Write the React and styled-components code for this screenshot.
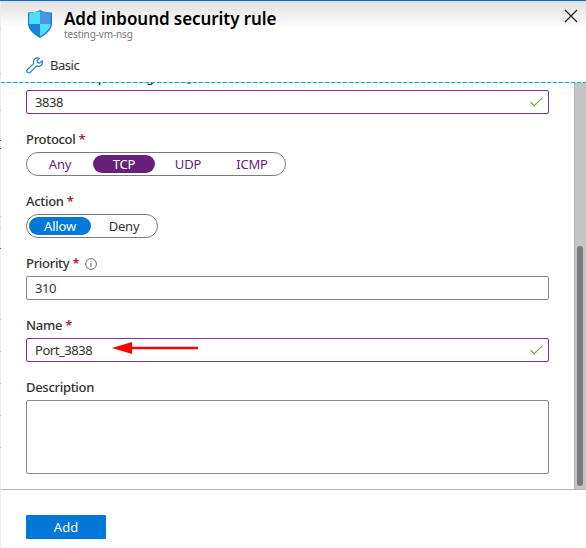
import React from "react";
import styled, { createGlobalStyle, css } from "styled-components";

const GlobalStyle = createGlobalStyle`
  * { box-sizing: border-box; }
  body { margin: 0; background: #fff; overflow: hidden; }
  button, input, textarea { font: inherit; letter-spacing: inherit; }
`;

const Screen = styled.div`
  display: flex;
  width: 586px;
  height: 548px;
  overflow: hidden;
  border-top: 1px solid #0072c9;
  font: 13px/18px "Noto Sans", "Open Sans", sans-serif;
  letter-spacing: -0.45px;
  color: #323130;
`;

const PageEdge = styled.div`
  flex: 0 0 1px;
  background: #eeeeee;
`;

const EdgeMark = styled.div`
  height: 1px;
  margin-top: ${(p) => p.$gap}px;
  background: ${(p) => p.$color};
`;

const Blade = styled.section`
  flex: 1;
  min-width: 0;
  display: flex;
  flex-direction: column;
`;

const Header = styled.header`
  display: flex;
  flex: none;
  height: 47px;
  padding: 8px 8px 0 26px;
  background: linear-gradient(#dfdfdf, #fff 26px);
`;

const Titles = styled.div`
  flex: 1;
  margin-left: 11px;
`;

const Title = styled.h1`
  margin: 0;
  font-size: 17px;
  line-height: 19px;
  font-weight: 600;
  letter-spacing: -0.07px;
  color: #000;
`;

const Subtitle = styled.div`
  font-size: 10px;
  line-height: 13px;
  letter-spacing: -0.13px;
  color: #7a7876;
`;

const CloseButton = styled.button`
  display: flex;
  width: 14px;
  height: 14px;
  padding: 0;
  border: 0;
  background: none;
`;

const Toolbar = styled.div`
  display: flex;
  flex: none;
  align-items: center;
  gap: 7px;
  height: 34px;
  padding-left: 25px;
`;

const Divider = styled.div`
  flex: none;
  height: 1px;
  background: repeating-linear-gradient(90deg, #00b4f0 0 4px, #c9dfe6 4px 6px);
`;

const Body = styled.div`
  display: flex;
  flex: none;
  height: 406px;
  overflow: hidden;
`;

const Form = styled.form`
  flex: 1;
  margin-top: -31px;
  padding: 0 25px;
`;

const Field = styled.div`
  display: flex;
  flex-direction: column;
  align-items: flex-start;
  height: 62px;
`;

const Label = styled.label`
  display: flex;
  flex: none;
  align-items: center;
  height: 38px;
  padding: 12px 0 0;
  font-weight: 500;
  letter-spacing: -0.3px;
  white-space: pre;
`;

const Required = styled.span`
  color: #a4262c;
  font-weight: 600;
`;

const box = css`
  width: 523px;
  border: 1px solid ${(p) => (p.$edited ? "#8a2da5" : "#8a8886")};
  border-radius: 2px;
  background: #fff;
`;

const InputBox = styled.div`
  ${box}
  display: flex;
  align-items: center;
  height: 24px;
  padding: 0 5px 0 8px;
`;

const Input = styled.input`
  flex: 1;
  min-width: 0;
  height: 20px;
  padding: 0;
  border: 0;
  outline: 0;
  background: none;
  color: inherit;
`;

const Area = styled.textarea`
  ${box}
  display: block;
  flex: none;
  height: 74px;
  resize: none;
`;

const Pills = styled.div`
  display: flex;
  height: 24px;
  padding: 2px;
  gap: 2px;
  border: 1px solid #7d7b79;
  border-radius: 12px;
`;

const Pill = styled.button`
  width: 62px;
  height: 18px;
  padding: 0;
  border: 0;
  border-radius: 9px;
  line-height: 18px;
  letter-spacing: -0.2px;
  background: ${(p) => (p.$on ? p.$fill : "none")};
  color: ${(p) => (p.$on ? "#fff" : p.$ink)};
`;

const ScrollTrack = styled.div`
  width: 12px;
  padding: 163px 2px 3px;
  border-left: 1px solid #b4b6b6;
  background: #c3c4c4;
`;

const ScrollThumb = styled.div`
  width: 6px;
  height: 100%;
  border-radius: 3px;
  background: #777b7d;
`;

const Footer = styled.footer`
  flex: 1;
  padding: 25px;
  border-top: 1px solid #b5b5b5;
`;

const AddButton = styled.button`
  display: block;
  width: 80px;
  height: 24px;
  padding: 0;
  border: 0;
  border-radius: 1px;
  background: #0078d7;
  color: #fff;
  letter-spacing: 0;
`;

const Pointer = styled.svg`
  position: absolute;
  left: 112px;
  top: 341px;
`;

const ShieldIcon = () => (
  <svg width="26" height="30" viewBox="0 0 26 30">
    <defs>
      <clipPath id="shield">
        <path d="M13 2.5c3.5 0 5.5.3 10.8 2v9.8c0 6-6.5 10.500-10.800 13.200C8.700 25 2.200 20.500 2.200 14.500V4.500C7.500 2.800 9.500 2.500 13 2.500z" />
      </clipPath>
    </defs>
    <path d="M13 1c2.500 1.800 7 2.600 12 2.500v11c0 7-7 11.500-12 14.500C8 26 1 21.500 1 14.500v-11C6 3.600 10.500 2.800 13 1z" fill="#1b7cc8" />
    <g clipPath="url(#shield)">
      <path d="M0 0h13v15H0z" fill="#4be0fb" />
      <path d="M13 0h13v15H13z" fill="#4a94e4" />
      <path d="M0 15h13v15H0z" fill="#1f80dc" />
      <path d="M13 15h13v15H13z" fill="#4be0fb" />
    </g>
  </svg>
);

const WrenchIcon = () => (
  <svg width="17" height="17" viewBox="0 0 17 17" fill="none" stroke="#1b7fd6" strokeWidth="1.2" strokeLinejoin="round">
    <path d="M13.4 1.200A4.300 4.300 0 0 0 7.700 6.600L1.400 12.500a2.050 2.050 0 0 0 2.900 2.900l6.200-6.300a4.300 4.300 0 0 0 5.700-5.300l-2.700 2.300-2-.400-.500-1.900z" />
  </svg>
);

const CloseIcon = () => (
  <svg width="14" height="14" viewBox="0 0 14 14" stroke="#222" strokeWidth="1.2">
    <path d="M1 1l12 12M13 1L1 13" />
  </svg>
);

const CheckIcon = () => (
  <svg width="13" height="10" viewBox="0 0 13 10" fill="none" stroke="#67b03a" strokeWidth="1.2">
    <path d="M.6 5l3.600 3.600L12.300.9" />
  </svg>
);

const InfoSvg = styled.svg`
  margin: 2px 0 0 6px;
`;

const InfoIcon = () => (
  <InfoSvg width="12" height="12" viewBox="0 0 12 12" fill="none" stroke="#605e5c">
    <circle cx="6" cy="6" r="5.4" strokeWidth=".9" />
    <path d="M6 5v4M6 3v1" />
  </InfoSvg>
);

const FieldLabel = ({ text, required, info }) => (
  <Label>
    {text}
    {required && <Required> *</Required>}
    {info && <InfoIcon />}
  </Label>
);

const TextField = ({ text, value, edited, info }) => (
  <Field>
    <FieldLabel text={text} required info={info} />
    <InputBox $edited={edited}>
      <Input defaultValue={value} />
      {edited && <CheckIcon />}
    </InputBox>
  </Field>
);

const PillField = ({ text, options, selected, fill, ink }) => (
  <Field>
    <FieldLabel text={text} required />
    <Pills>
      {options.map((o) => (
        <Pill key={o} type="button" $on={o === selected} $fill={fill} $ink={ink}>
          {o}
        </Pill>
      ))}
    </Pills>
  </Field>
);

// Slivers of the page behind the blade: gap above each one, then its colour.
const edgeMarks = [
  [27, "#bdbdbd"],
  [44, "#bdbdbd"],
  [36, "#bdbdbd"],
  [29, "#2f6fc4"],
  [7, "#2f5fa8"],
  [67, "#7fdcf2"],
  [10, "#c6c6c6"],
  [20, "#2f6fc4"],
  [70, "#c6c6c6"],
  [31, "#b5b5b5"],
  [31, "#b5b5b5"],
  [31, "#b5b5b5"],
  [31, "#b5b5b5"],
];

export default function App() {
  return (
    <>
      <GlobalStyle />
      <Screen>
        <PageEdge>
          {edgeMarks.map(([gap, color], i) => (
            <EdgeMark key={i} $gap={gap} $color={color} />
          ))}
        </PageEdge>
        <Blade>
          <Header>
            <ShieldIcon />
            <Titles>
              <Title>Add inbound security rule</Title>
              <Subtitle>testing-vm-nsg</Subtitle>
            </Titles>
            <CloseButton aria-label="Close">
              <CloseIcon />
            </CloseButton>
          </Header>
          <Toolbar>
            <WrenchIcon />
            Basic
          </Toolbar>
          <Divider />
          <Body>
            <Form>
              <TextField text="Destination port ranges" value="3838" edited info />
              <PillField text="Protocol" options={["Any", "TCP", "UDP", "ICMP"]} selected="TCP" fill="#68217a" ink="#68217a" />
              <PillField text="Action" options={["Allow", "Deny"]} selected="Allow" fill="#0078d7" ink="#323130" />
              <TextField text="Priority" value="310" info />
              <TextField text="Name" value="Port_3838" edited />
              <Field>
                <FieldLabel text="Description" />
                <Area />
              </Field>
            </Form>
            <ScrollTrack>
              <ScrollThumb />
            </ScrollTrack>
          </Body>
          <Footer>
            <AddButton>Add</AddButton>
          </Footer>
        </Blade>
      </Screen>
      <Pointer width="87" height="14" viewBox="0 0 87 14" fill="#f00">
        <path d="M0 7L20 1v12z" />
        <path d="M19 5.800h67v2.400H19z" />
      </Pointer>
    </>
  );
}
